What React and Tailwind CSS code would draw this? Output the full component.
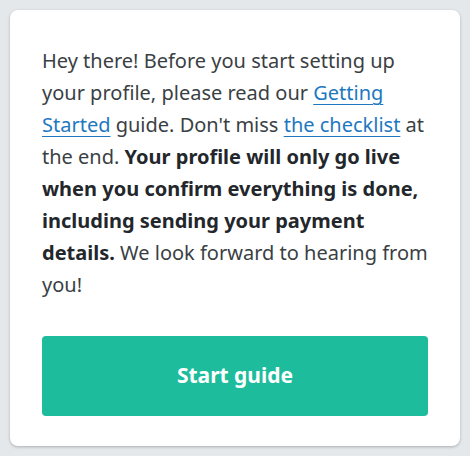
export default function App() {
  return (
    <div className="min-h-screen bg-[#e4e8eb] p-[10px]" style={{ fontFamily: '"Noto Sans", "Open Sans", sans-serif' }}>
      <div className="w-[450px] h-[436px] bg-white rounded-lg shadow-[0_1px_3px_rgba(0,0,0,0.25)] px-8 pt-[35px] pb-[30px] flex flex-col">
        <p className="text-[20px] leading-8 text-[#3a3f44]">
          Hey there! Before you start setting up your profile, please read our{' '}
          <a href="#" className="text-[#1d78c1] underline underline-offset-4 decoration-1">Getting Started</a> guide. Don't miss{' '}
          <a href="#" className="text-[#1d78c1] underline underline-offset-4 decoration-1">the checklist</a> at the end.{' '}
          <strong className="font-bold text-[#23272b]">Your profile will only go live when you confirm everything is done, including sending your payment details.</strong>{' '}
          We look forward to hearing from you!
        </p>
        <button className="mt-[35px] h-20 w-full rounded bg-[#1dbc9c] text-white font-bold text-[21px]">
          Start guide
        </button>
      </div>
    </div>
  );
}
